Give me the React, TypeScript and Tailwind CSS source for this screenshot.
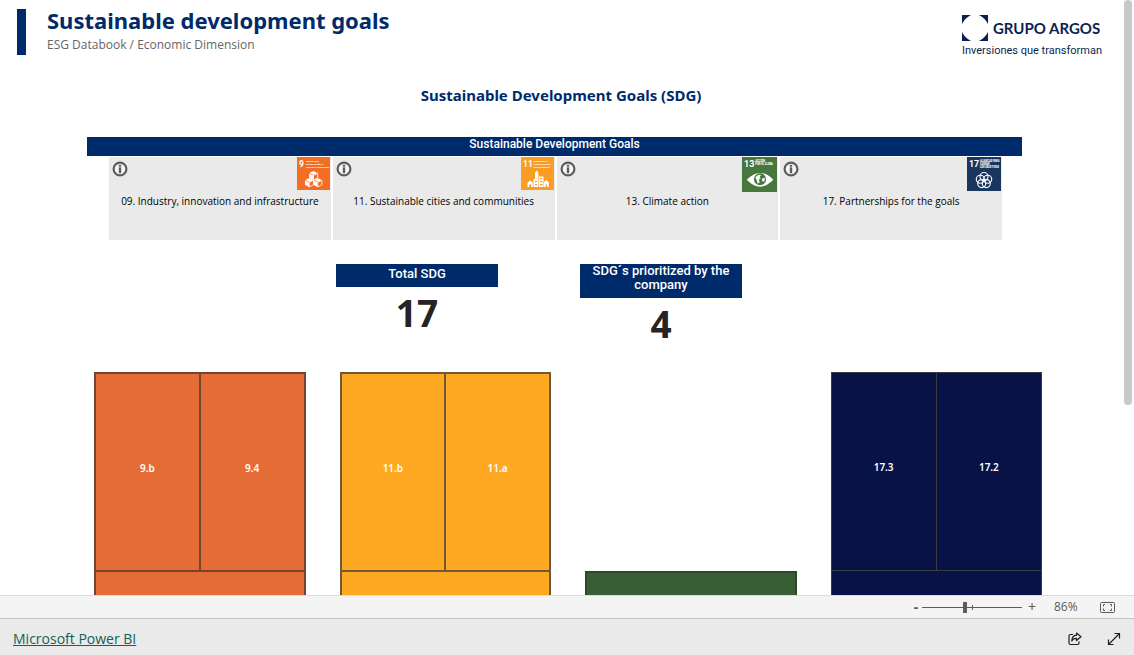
import type { ReactNode } from "react";

function InfoIcon() {
  return (
    <svg viewBox="0 0 16 16" className="size-4" aria-hidden="true">
      <circle cx="8" cy="8" r="6.4" fill="#f6f6f6" stroke="#5e5e5e" strokeWidth="2.2" />
      <rect x="6.8" y="3.8" width="2.4" height="1.9" fill="#5e5e5e" />
      <rect x="6.8" y="6.3" width="2.4" height="5.9" fill="#5e5e5e" />
    </svg>
  );
}

function GoalTile({ num, lines, color, size, children }: { num: string; lines: string[]; color: string; size: string; children: ReactNode }) {
  return (
    <svg viewBox="0 0 33 33" className={size} role="img" aria-label={`SDG ${num}`}>
      <rect width="33" height="33" fill={color} />
      <text x="2" y="9.5" fontSize="8.5" fontWeight="700" fill="#fff" fontFamily="'Liberation Sans Narrow', 'Roboto', sans-serif">
        {num}
      </text>
      {lines.map((l, i) => (
        <text key={l} x={num.length > 1 ? 12.5 : 9} y={5 + i * 3} fontSize="2.5" fontWeight="900" fill="#fff" fontFamily="'Roboto', sans-serif">
          {l}
        </text>
      ))}
      {children}
    </svg>
  );
}

function Cube({ x, y }: { x: number; y: number }) {
  return (
    <g transform={`translate(${x} ${y})`}>
      <path d="M0 -4 4 -2 0 0 -4 -2Z" fill="#fff" />
      <path d="M-4.3 -1.5 -.3 .6V5L-4.3 2.8Z" fill="#fff" />
      <path d="M4.2 -1.7V2.8L0 5V.4Z" fill="none" stroke="#fff" strokeWidth=".8" />
    </g>
  );
}

const goals = [
  {
    title: "09. Industry, innovation and infrastructure",
    icon: (
      <GoalTile num="9" color="#f36d25" size="size-[33px]" lines={["INDUSTRIA,", "INNOVACIÓN E", "INFRAESTRUCTURA"]}>
        <Cube x={16.5} y={18} />
        <Cube x={12.3} y={25} />
        <Cube x={20.7} y={25} />
      </GoalTile>
    ),
  },
  {
    title: "11. Sustainable cities and communities",
    icon: (
      <GoalTile num="11" color="#f99d26" size="size-[33px]" lines={["CIUDADES Y", "COMUNIDADES", "SOSTENIBLES"]}>
        <path
          fill="#fff"
          fillRule="evenodd"
          d="M6.5 30V26L9.2 23.2 12 26V30H10.3V27.5H8.3V30ZM12.5 30V22H14V16L15.7 13.5 17.4 16V30ZM18 30V19.5H22.5V30ZM19 21V22.3H21.3V21ZM19 24V25.3H21.3V24ZM19 27V28.3H21.3V27ZM14 24V25.3H16V24ZM14 27V28.3H16V27ZM23 30V25L25.3 23 27.7 25V30H26V27.5H24.7V30Z"
        />
      </GoalTile>
    ),
  },
  {
    title: "13. Climate action",
    icon: (
      <GoalTile num="13" color="#48773e" size="size-[35px]" lines={["ACCIÓN", "POR EL CLIMA"]}>
        <path d="M4.5 21.5Q17 8.5 29.5 21.5 17 34.5 4.5 21.5Z" fill="#fff" />
        <circle cx="17" cy="21" r="5.7" fill="#48773e" />
        <path d="M12.6 19.2 15.5 16.8 18 17.2 16.5 19 17.6 20.4 15.6 21.5 16.8 23.5 14.8 25.2 14 22.4ZM18.8 20.5 21.8 19.5 21 23 19.2 23.2Z" fill="#fff" />
      </GoalTile>
    ),
  },
  {
    title: "17. Partnerships for the goals",
    icon: (
      <GoalTile num="17" color="#19365f" size="size-[34px]" lines={["ALIANZAS PARA", "LOGRAR", "LOS OBJETIVOS"]}>
        <g fill="none" stroke="#fff" strokeWidth="1.1">
          <circle cx="16.5" cy="19" r="3.9" />
          <circle cx="20.1" cy="21.6" r="3.9" />
          <circle cx="18.7" cy="25.8" r="3.9" />
          <circle cx="14.3" cy="25.8" r="3.9" />
          <circle cx="12.9" cy="21.6" r="3.9" />
        </g>
      </GoalTile>
    ),
  },
];

function Treemap({ labels, fill, frame }: { labels: string[]; fill: string; frame: string }) {
  return (
    <div className={`grid grid-cols-2 ${frame}`}>
      {labels.map((label) => (
        <div key={label} className={`flex items-center justify-center pb-2 text-[10px] font-semibold text-white ${fill}`}>
          {label}
        </div>
      ))}
      <div className={`col-span-2 ${fill}`} />
    </div>
  );
}

function Kpi({ label, value, padding }: { label: string; value: number; padding: string }) {
  return (
    <div className="w-[162px] text-center">
      <h3 className={`bg-[#002b6b] font-['Roboto',sans-serif] text-[13px] leading-[14px] font-medium text-white ${padding}`}>{label}</h3>
      <p className="mt-1.5 text-[37px] leading-10 font-bold text-[#252423]">{value}</p>
    </div>
  );
}

export default function App() {
  return (
    <div className="flex h-screen flex-col overflow-hidden bg-white font-['Noto_Sans','Open_Sans',sans-serif]">
      <main className="relative min-h-0 flex-1 overflow-hidden">
        <header className="flex items-start justify-between pt-2 pr-8 pl-[17px]">
          <div className="flex">
            <div className="mt-px h-[46px] w-[9px] bg-[#002b6b]" />
            <div className="pl-[21px]">
              <h1 className="text-[22px] leading-6 font-bold text-[#002b6b]">Sustainable development goals</h1>
              <p className="font-['Open_Sans',sans-serif] text-[12px] leading-[26px] text-[#666]">ESG Databook / Economic Dimension</p>
            </div>
          </div>
          <div className="pt-[7px] text-[#0b1f50]">
            <div className="flex items-center gap-[5px]">
              <svg viewBox="0 0 26 26" className="size-[26px]" aria-hidden="true">
                <path fill="#0b1f50" d="M0 0H9Q3 3 0 9ZM26 0V9Q23 3 17 0ZM26 26H17Q23 23 26 17ZM0 26V17Q3 23 9 26Z" />
              </svg>
              <span className="font-['Lato',sans-serif] text-[15px] leading-[26px] font-bold">GRUPO ARGOS</span>
            </div>
            <p className="font-['Roboto',sans-serif] text-[11px] leading-5">Inversiones que transforman</p>
          </div>
        </header>

        <h2 className="mt-6 pr-3 text-center text-[15px] leading-5 font-bold text-[#002b6b]">Sustainable Development Goals (SDG)</h2>

        <section className="mt-8 pr-28 pl-[87px]">
          <h3 className="bg-[#002b6b] pb-[5px] text-center font-['Roboto',sans-serif] text-[12px] leading-[14px] font-medium text-white">
            Sustainable Development Goals
          </h3>
          <div className="mt-px grid grid-cols-4 gap-0.5 pr-5 pl-[22px]">
            {goals.map((g) => (
              <article key={g.title} className="h-[83px] bg-[#eaeaea]">
                <div className="flex h-[35px] items-start justify-between pr-px pl-[3px]">
                  <button type="button" aria-label={`About ${g.title}`} className="pt-1">
                    <InfoIcon />
                  </button>
                  {g.icon}
                </div>
                <p className="text-center font-['Open_Sans',sans-serif] text-[10px] leading-[18px] text-black">{g.title}</p>
              </article>
            ))}
          </div>
        </section>

        <section className="mt-6 flex justify-center gap-[82px] pr-14">
          <Kpi label="Total SDG" value={17} padding="px-2 pt-[3px] pb-1.5" />
          <Kpi label="SDG´s prioritized by the company" value={4} padding="px-2 pb-1.5" />
        </section>

        <section className="mt-7 grid grid-cols-4 items-start gap-[34px] pr-[92px] pl-[94px]">
          <Treemap labels={["9.b", "9.4"]} fill="bg-[#e66c37]" frame="grid-rows-[196px_198px] gap-0.5 bg-[#75462f] p-0.5" />
          <Treemap labels={["11.b", "11.a"]} fill="bg-[#ffa922]" frame="grid-rows-[196px_198px] gap-0.5 bg-[#6e5a38] p-0.5" />
          <div className="mt-[199px] h-[200px] border-2 border-[#2f4630] bg-[#375e35]" />
          <Treemap labels={["17.3", "17.2"]} fill="bg-[#091247]" frame="grid-rows-[197px_198px] gap-px bg-[#3b3b40] p-px" />
        </section>

        <div className="absolute top-0 right-0.5 h-[405px] w-2 rounded-full bg-[#c8c8c8]" />
      </main>

      <div className="flex h-6 shrink-0 items-center justify-end border-t border-b border-t-[#dcdcdc] border-b-[#c2c2c2] bg-[#f4f4f4] pr-[19px] text-[#5c5c5c]">
        <button type="button" aria-label="Zoom out" className="w-3 text-center text-[14px] leading-5 font-bold">-</button>
        <div className="relative flex w-[100px] items-center">
          <input
            type="range"
            aria-label="Zoom"
            min={0}
            max={100}
            defaultValue={43}
            className="h-3 w-full appearance-none bg-[linear-gradient(#5c5c5c,#5c5c5c)] bg-[length:100%_1px] bg-center bg-no-repeat [&::-webkit-slider-thumb]:h-[11px] [&::-webkit-slider-thumb]:w-1 [&::-webkit-slider-thumb]:appearance-none [&::-webkit-slider-thumb]:bg-[#5c5c5c]"
          />
          <span className="absolute left-1/2 h-[5px] w-px bg-[#5c5c5c]" />
        </div>
        <button type="button" aria-label="Zoom in" className="w-5 text-center text-[14px] leading-5">+</button>
        <span className="ml-3 w-9 font-['Open_Sans',sans-serif] text-[12px] leading-5">86%</span>
        <button type="button" aria-label="Fit to page" className="ml-2.5">
          <svg viewBox="0 0 15 11" className="h-[11px] w-[15px]" fill="none" stroke="#5c5c5c">
            <rect x=".5" y=".5" width="14" height="10" rx="1" />
            <path d="M5 2.5H3.5V4.5M10 2.5H11.5V4.5M5 8.5H3.5V6.5M10 8.5H11.5V6.5" />
          </svg>
        </button>
      </div>

      <footer className="flex h-9 shrink-0 items-center justify-between bg-[#eaeaea] pt-1 pr-[13px] pl-[13px]">
        <a href="#" className="font-['Open_Sans',sans-serif] text-[14px] leading-5 text-[#0f6259] underline">Microsoft Power BI</a>
        <div className="flex items-center gap-[25px] text-[#1f1f1f]">
          <button type="button" aria-label="Share">
            <svg viewBox="0 0 14 14" className="size-3.5" fill="none" stroke="currentColor" strokeWidth="1.2" strokeLinejoin="round">
              <path d="M5 2.5H2.5Q1 2.5 1 4V11Q1 12.5 2.5 12.5H9.5Q11 12.5 11 11V9.5" />
              <path d="M8.5 1 13 4.8 8.5 8.5V6.4Q5.3 6.2 3.8 9 4 3.7 8.5 3.2Z" />
            </svg>
          </button>
          <button type="button" aria-label="Full screen">
            <svg viewBox="0 0 14 14" className="size-3.5" fill="none" stroke="currentColor" strokeWidth="1.2">
              <path d="M1.5 12.5 12.5 1.5M7.5 1.5H12.5V6.5M1.5 7.5V12.5H6.5" />
            </svg>
          </button>
        </div>
      </footer>
    </div>
  );
}
